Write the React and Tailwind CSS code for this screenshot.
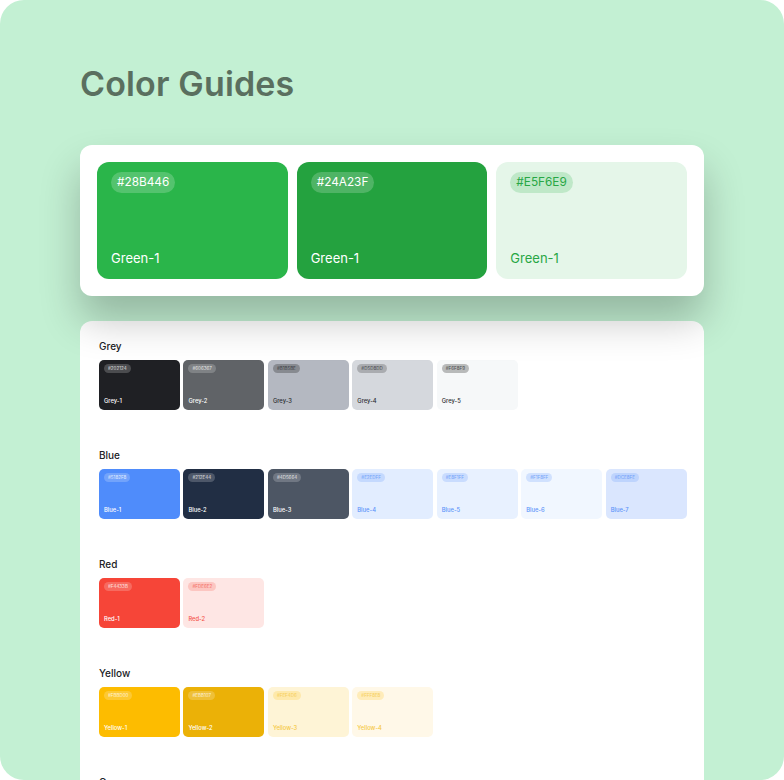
const mainSwatches = [
  { hex: '#28B446', name: 'Green-1', bg: 'bg-[#2AB54A]', text: 'text-white', pill: 'bg-white/20' },
  { hex: '#24A23F', name: 'Green-1', bg: 'bg-[#24A23F]', text: 'text-white', pill: 'bg-white/20' },
  { hex: '#E5F6E9', name: 'Green-1', bg: 'bg-[#E5F6E9]', text: 'text-[#28A745]', pill: 'bg-[#28B446]/20' },
];

const dark = { text: 'text-white', pill: 'bg-white/20' };

const groups = [
  {
    title: 'Grey',
    items: [
      { hex: '#202124', name: 'Grey-1', bg: 'bg-[#1F2024]', ...dark },
      { hex: '#606367', name: 'Grey-2', bg: 'bg-[#606367]', ...dark },
      { hex: '#B1B5BE', name: 'Grey-3', bg: 'bg-[#B4B8C1]', text: 'text-[#2a2c30]', pill: 'bg-black/25' },
      { hex: '#D5D8DD', name: 'Grey-4', bg: 'bg-[#D5D8DD]', text: 'text-[#2a2c30]', pill: 'bg-black/20' },
      { hex: '#F6F8F9', name: 'Grey-5', bg: 'bg-[#F6F8F9]', text: 'text-[#2a2c30]', pill: 'bg-black/25' },
    ],
  },
  {
    title: 'Blue',
    items: [
      { hex: '#5182F8', name: 'Blue-1', bg: 'bg-[#4F8CFB]', ...dark },
      { hex: '#212E44', name: 'Blue-2', bg: 'bg-[#212E44]', ...dark },
      { hex: '#4D5664', name: 'Blue-3', bg: 'bg-[#4D5664]', ...dark },
      { hex: '#E2EDFF', name: 'Blue-4', bg: 'bg-[#E2EDFF]', text: 'text-[#5C93F9]', pill: 'bg-[#4F8CFB]/20' },
      { hex: '#E8F1FF', name: 'Blue-5', bg: 'bg-[#E8F1FF]', text: 'text-[#5C93F9]', pill: 'bg-[#4F8CFB]/20' },
      { hex: '#F1F8FF', name: 'Blue-6', bg: 'bg-[#F1F7FF]', text: 'text-[#5C93F9]', pill: 'bg-[#4F8CFB]/20' },
      { hex: '#DCE8FE', name: 'Blue-7', bg: 'bg-[#DAE6FE]', text: 'text-[#5C93F9]', pill: 'bg-[#4F8CFB]/20' },
    ],
  },
  {
    title: 'Red',
    items: [
      { hex: '#F4433B', name: 'Red-1', bg: 'bg-[#F64538]', ...dark },
      { hex: '#FDE6E2', name: 'Red-2', bg: 'bg-[#FEE6E4]', text: 'text-[#F4574C]', pill: 'bg-[#F64538]/20' },
    ],
  },
  {
    title: 'Yellow',
    items: [
      { hex: '#FBBD00', name: 'Yellow-1', bg: 'bg-[#FDBC00]', ...dark },
      { hex: '#EBB107', name: 'Yellow-2', bg: 'bg-[#EBB107]', ...dark },
      { hex: '#FEF4D6', name: 'Yellow-3', bg: 'bg-[#FEF4D6]', text: 'text-[#F5C842]', pill: 'bg-[#FDBC00]/20' },
      { hex: '#FFF8E8', name: 'Yellow-4', bg: 'bg-[#FFF8E8]', text: 'text-[#F5C842]', pill: 'bg-[#FDBC00]/20' },
    ],
  },
  {
    title: 'Green',
    items: [
      { hex: '#28B446', name: 'Green-1', bg: 'bg-[#28B446]', ...dark },
    ],
  },
];

const MainSwatch = ({ hex, name, bg, text, pill }) => (
  <div className={`flex h-[117px] flex-1 flex-col items-start justify-between rounded-xl pt-[10px] pr-[14px] pb-[12px] pl-[14px] ${bg} ${text}`}>
    <span className={`rounded-full px-[6px] py-[2px] text-[11.8px] leading-[17px] ${pill}`}>{hex}</span>
    <span className="text-[13px] leading-[17px]">{name}</span>
  </div>
);

const SmallSwatch = ({ hex, name, bg, text, pill }) => (
  <div className={`flex h-[50px] w-[81px] shrink-0 flex-col items-start justify-between rounded-[5px] pt-[4px] pr-[5px] pb-[5px] pl-[5px] ${bg} ${text}`}>
    <span className={`rounded-full px-[4px] py-[1px] text-[4.5px] leading-[7px] ${pill}`}>
      <span className="opacity-80">{hex}</span>
    </span>
    <span className="text-[5.8px] leading-[8px] font-medium">{name}</span>
  </div>
);

const App = () => (
  <div className="h-[780px] w-[784px] overflow-hidden bg-white font-['Inter',sans-serif]">
    <div className="h-[780px] overflow-hidden rounded-[24px] bg-[#C3F0D3] px-[80px] pt-[62px]">
      <h1 className="h-[83px] text-[34px] leading-[44px] font-semibold tracking-[0.15px] text-[#5A6F5F]">Color Guides</h1>

      <div className="relative z-10 flex gap-[9px] rounded-xl bg-white p-[17px] shadow-[0_24px_40px_rgba(0,0,0,0.24)]">
        {mainSwatches.map((s) => (
          <MainSwatch key={s.hex} {...s} />
        ))}
      </div>

      <div className="mt-[25px] flex flex-col gap-[38px] rounded-xl bg-white pt-[18px] pr-[17px] pb-10 pl-[19px]">
        {groups.map((g) => (
          <div key={g.title}>
            <h2 className="mb-[7px] text-[10px] leading-[14px] font-medium text-[#202124]">{g.title}</h2>
            <div className="flex gap-[3.45px]">
              {g.items.map((s) => (
                <SmallSwatch key={s.name} {...s} />
              ))}
            </div>
          </div>
        ))}
      </div>
    </div>
  </div>
);

export default App;
